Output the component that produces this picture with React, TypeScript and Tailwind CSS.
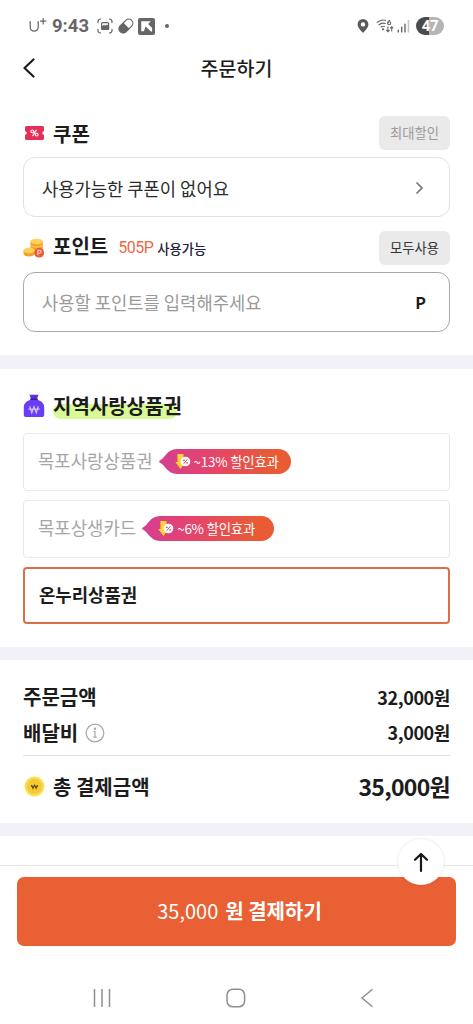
import type { ReactNode } from "react";

interface SectionTitleProps {
  icon: ReactNode;
  children: ReactNode;
}

interface VoucherProps {
  name: string;
  discount?: string;
  selected?: boolean;
}

const vouchers: VoucherProps[] = [
  { name: "목포사랑상품권", discount: "~13% 할인효과" },
  { name: "목포상생카드", discount: "~6% 할인효과" },
  { name: "온누리상품권", selected: true },
];

function StatusBar() {
  return (
    <div className="flex h-[52px] items-center justify-between pl-[29px] pr-[29px] text-[#666]">
      <div className="flex items-center">
        <svg width="18" height="20" viewBox="0 0 18 20" fill="none" stroke="currentColor" strokeWidth="1.2">
          <path d="M1.2 5v6.2a4 4 0 0 0 8 0V5M11 5.2h6.4M14.2 2v6.4" />
        </svg>
        <span className="ml-[5px] w-[38px] font-[Roboto] text-[18.500px] leading-5 font-bold whitespace-nowrap">9:43</span>
        {/* 캡처 */}
        <svg className="ml-[6.500px]" width="16" height="16" viewBox="0 0 16 16" fill="none" stroke="currentColor" strokeWidth="1.2">
          <path d="M1 5V3.500Q1 1 4 1M12 1q3 0 3 2.500V5M15 11v1.500q0 2.500-3 2.500M4 15q-3 0-3-2.500V11" />
          <rect x="4.600" y="4.700" width="7" height="6.800" rx="1" />
          <path d="M5 11V9l2-1.500 1.500 1L10 7.200l1.500 1V11z" fill="currentColor" />
        </svg>
        {/* 알약 */}
        <svg className="ml-[5px]" width="16" height="16" viewBox="0 0 16 16">
          <g transform="rotate(-45 8 8)">
            <rect x="0" y="3.900" width="16" height="8.200" rx="4.100" fill="none" stroke="currentColor" strokeWidth="1.200" />
            <path d="M8.500 3.400H4a4.600 4.600 0 0 0 0 9.200h4.500z" fill="currentColor" />
          </g>
        </svg>
        <svg className="ml-[4px]" width="17" height="17" viewBox="0 0 17 17">
          <rect width="17" height="17" rx="2" fill="currentColor" />
          <path d="M3.200 3.200h9.600l-2.700 2.700 4 4v3.600h-1.200L7.600 8.600 5.900 13.300H3.200z" fill="#fff" />
        </svg>
        <span className="ml-[10px] size-1 rounded-full bg-[#666]" />
      </div>
      <div className="flex items-center">
        <svg width="12" height="14" viewBox="0 0 12 14">
          <path fillRule="evenodd" d="M6 0a5.400 5.400 0 0 1 5.400 5.400C11.400 9 6 13.800 6 13.800S.6 9 .6 5.400A5.400 5.400 0 0 1 6 0zm0 3.200a2.200 2.200 0 1 0 0 4.400 2.200 2.200 0 0 0 0-4.400z" fill="#5a5a5a" />
        </svg>
        <svg className="ml-[7px]" width="19" height="16" viewBox="0 0 19 16" fill="none" stroke="currentColor" strokeWidth="1.100">
          <path d="M.7 4.700Q5 .8 10 2.400M2.600 7Q6 4.200 9.800 5.600M4.600 9.200q2.200-1.600 4.400-.6" />
          <circle cx="7" cy="11.300" r=".6" fill="currentColor" />
          <path d="M14.200 2.200q-2.600.8-2.600 3.200" />
          <circle cx="13.200" cy="5.300" r="1.500" />
          <path d="M11.900 8.400v5.200m-1.600-1.600 1.600 1.700 1.600-1.700M15.700 13.600V8.800m-1.600 1.600 1.600-1.700 1.600 1.700" />
        </svg>
        <svg className="ml-[2px]" width="13" height="14" viewBox="0 0 13 14" fill="currentColor">
          <rect x=".6" y="10.500" width="1.400" height="3" rx=".6" />
          <rect x="4" y="7.500" width="1.400" height="6" rx=".6" />
          <rect x="7.300" y="4.500" width="1.400" height="9" rx=".6" />
          <rect x="10.700" y="1" width="1.500" height="12.500" rx=".6" fill="#c4c4c4" />
        </svg>
        <div className="ml-[6px] flex h-[18px] w-7 items-center justify-center rounded-full bg-linear-to-r from-[#4b4b4b] from-47% to-[#b5b5b5] to-47% font-[Roboto] text-[15px] leading-none font-bold tracking-[-0.3px] text-white">
          47
        </div>
      </div>
    </div>
  );
}

function CouponIcon() {
  return (
    <svg width="21" height="16" viewBox="0 0 21 16">
      <path d="M2.500 1h16a1.500 1.500 0 0 1 1.500 1.500v3.700a1.800 1.800 0 0 0 0 3.600v3.700a1.500 1.500 0 0 1-1.500 1.500h-16A1.500 1.500 0 0 1 1 13.500V9.800a1.800 1.800 0 0 0 0-3.600V2.500A1.500 1.500 0 0 1 2.500 1z" fill="#e52f58" />
      <g fill="none" stroke="#fff" strokeWidth="1.100">
        <circle cx="8.300" cy="6.400" r="1.400" />
        <circle cx="12.700" cy="9.600" r="1.400" />
        <path d="M12.400 4.900 8.600 11.100" />
      </g>
    </svg>
  );
}

function PointIcon() {
  return (
    <svg width="22" height="20" viewBox="0 0 22 20">
      <path d="M7.500 3.500v12.800h12.300V3.500z" fill="#f2a52b" />
      <ellipse cx="13.600" cy="3.600" rx="6.200" ry="2.800" fill="#ffd05a" />
      <path d="M7.500 7.200q6 4 12.200 0M7.500 11q6 4 12.200 0" fill="none" stroke="#ffcf5c" strokeWidth="1" />
      <path d="M.5 12.500v3.600q1 2.500 5.500 2.500t5.600-2.500v-3.600z" fill="#f0a22c" />
      <ellipse cx="6" cy="12.500" rx="5.600" ry="2.700" fill="#ffd05a" />
      <circle cx="16.200" cy="14.700" r="4.900" fill="#ee5a35" />
      <path d="M14.900 17.300v-5h1.700a1.500 1.500 0 0 1 0 3h-1.700" fill="none" stroke="#ffd9cd" strokeWidth="1.100" />
    </svg>
  );
}

function BagIcon() {
  return (
    <svg width="22" height="24" viewBox="0 0 22 24">
      <path d="M6.500.8h9L14.300 4v3.500H7.700V4z" fill="#5a2ee0" />
      <path d="M6.800 6h8.400C19.300 7.500 21.200 10 21.200 13v7.500a2.600 2.600 0 0 1-2.600 2.600H3.400A2.600 2.600 0 0 1 .8 20.500V13C.8 10 2.700 7.500 6.800 6z" fill="#6a3cf5" />
      <path d="M7.300 5.300h7.400" stroke="#3c1d9c" strokeWidth="1.500" />
      <path d="m6.700 12.300 2.100 6.400L11 12.600l2.200 6.100 2.100-6.400M5.300 15.200h11.400" fill="none" stroke="#cbbcff" strokeWidth="1.300" />
    </svg>
  );
}

function CoinIcon() {
  return (
    <svg width="21" height="21" viewBox="0 0 21 21">
      <circle cx="10.500" cy="10.500" r="10" fill="#fbe14c" />
      <circle cx="10.500" cy="10.500" r="7.800" fill="#f3cb38" />
      <path d="m7.400 8.900 1.500 3.500 1.600-3.300 1.600 3.300 1.500-3.500M6.900 10.200h7.200" fill="none" stroke="#6d5212" strokeWidth="1.100" />
    </svg>
  );
}

function SectionTitle({ icon, children }: SectionTitleProps) {
  return (
    <div className="flex items-center">
      <span className="flex w-[30px] shrink-0 items-center">{icon}</span>
      {children}
    </div>
  );
}

function DiscountTag({ label }: { label: string }) {
  return (
    <div className="relative ml-[6px] flex h-[25px] w-[132px] items-center pl-4">
      <svg className="absolute inset-0" width="132" height="25" viewBox="0 0 132 25">
        <defs>
          <linearGradient id="tag" x1="0" x2="1">
            <stop offset="0" stopColor="#d43f91" />
            <stop offset=".4" stopColor="#e5446b" />
            <stop offset=".85" stopColor="#e85b35" />
          </linearGradient>
        </defs>
        <path d="M.5 13.300Q-.3 12.500.5 11.700C6 9.500 8 0 18 0h101.500a12.500 12.500 0 0 1 0 25H18C8 25 6 15.500.5 13.300z" fill="url(#tag)" />
      </svg>
      <svg className="relative shrink-0" width="16" height="17" viewBox="0 0 16 17">
        <path d="M2.500 1h6v7.500h2.300L5.500 16 .3 9h2.200z" fill="#ffd43b" />
        <circle cx="10.500" cy="8.500" r="4.800" fill="#fff" />
        <path d="m12.300 6.300-3.600 4.400" stroke="#e5446b" strokeWidth="1" />
        <circle cx="8.900" cy="7.300" r=".9" fill="#e5446b" />
        <circle cx="12.100" cy="9.800" r=".9" fill="#e5446b" />
      </svg>
      <span className="relative ml-[3px] text-[13.400px] leading-none tracking-[-0.2px] whitespace-nowrap text-white">{label}</span>
    </div>
  );
}

function Voucher({ name, discount, selected }: VoucherProps) {
  if (selected) {
    return (
      <div className="flex h-[57px] items-center rounded-[4px] border-2 border-[#dd6f47] pb-[2px] pl-[14px] text-[17.8px] font-bold text-[#1c1c1c]">
        {name}
      </div>
    );
  }
  return (
    <div className="flex h-[58px] items-center rounded-[4px] border border-[#e9e9e9] pb-px pl-[14px] text-[17.8px] text-[#a6a6a6]">
      <span className="-mt-[2px]">{name}</span>
      {discount && <DiscountTag label={discount} />}
    </div>
  );
}

export default function App() {
  return (
    <div className="flex h-[1024px] w-[473px] flex-col overflow-hidden bg-white font-['Noto_Sans_CJK_KR',sans-serif] text-[#1c1c1c]">
      <StatusBar />

      {/* 헤더 */}
      <header className="grid h-8 grid-cols-[1fr_auto_1fr] items-center px-[22px]">
        <svg width="14" height="20" viewBox="0 0 14 20" fill="none" stroke="#1c1c1c" strokeWidth="2.200" strokeLinecap="round" strokeLinejoin="round">
          <path d="M11.500 1.500 2.500 10l9 8.500" />
        </svg>
        <h1 className="text-[19.5px] leading-8 font-medium">주문하기</h1>
      </header>

      {/* 쿠폰, 포인트 */}
      <section className="px-[23px] pt-8">
        <div className="flex h-[34px] items-center justify-between">
          <SectionTitle icon={<span className="pl-px"><CouponIcon /></span>}>
            <h2 className="mt-[2px] text-[20px] leading-none font-bold">쿠폰</h2>
          </SectionTitle>
          <button className="h-[34px] w-[71px] rounded-[6px] bg-[#eaeaea] text-[13.3px] text-[#9b9b9b]">최대할인</button>
        </div>
        <div className="mt-[7px] flex h-[60px] items-center justify-between rounded-[12px] border border-[#e3e3e3] pt-[2px] pr-[25px] pl-[18px]">
          <span className="text-[17.7px] text-[#2c2c2c]">사용가능한 쿠폰이 없어요</span>
          <svg width="9" height="14" viewBox="0 0 9 14" fill="none" stroke="#777" strokeWidth="1.700">
            <path d="m1.500 1.500 5.500 5.500-5.500 5.500" />
          </svg>
        </div>
        <div className="mt-[14px] flex h-[34px] items-center justify-between">
          <SectionTitle icon={<PointIcon />}>
            <h2 className="-mt-[4px] text-[20px] leading-none font-bold">포인트</h2>
            <span className="ml-[10px] w-[35px] font-[Roboto] text-[16px] tracking-[-0.5px] text-[#ee6844]">505P</span>
            <span className="ml-[4px] mt-px text-[13.300px] font-medium text-[#26203a]">사용가능</span>
          </SectionTitle>
          <button className="h-[34px] w-[71px] rounded-[6px] bg-[#eaeaea] text-[13.300px] text-[#333]">모두사용</button>
        </div>
        <div className="mt-[7px] flex h-[60px] items-center justify-between rounded-[12px] border border-[#a9a9a9] pr-[23px] pl-[18px]">
          <span className="text-[17.7px] text-[#9a9a9a]">사용할 포인트를 입력해주세요</span>
          <span className="text-[16px] font-bold">P</span>
        </div>
      </section>

      <div className="mt-[23px] h-[14px] shrink-0 bg-[#f1f1f7]" />

      {/* 지역사랑상품권 */}
      <section className="px-[23px] pt-[23px]">
        <SectionTitle icon={<BagIcon />}>
          <h2 className="relative isolate text-[20px] leading-7 font-bold">
            <span className="absolute bottom-px left-0 -z-10 h-[15px] w-[124px] rounded-full bg-[#d9fa97]" />
            지역사랑상품권
          </h2>
        </SectionTitle>
        <div className="mt-[13px] flex flex-col gap-[9px]">
          {vouchers.map((voucher) => (
            <Voucher key={voucher.name} {...voucher} />
          ))}
        </div>
      </section>

      <div className="mt-[23px] h-[13px] shrink-0 bg-[#f1f1f7]" />

      {/* 결제 금액 */}
      <section className="px-[23px] pt-[19px] font-bold">
        <div className="flex h-9 items-center justify-between">
          <span className="text-[20px]">주문금액</span>
          <span className="text-[18px] tracking-[-0.4px]">32,000원</span>
        </div>
        <div className="flex h-[35px] items-center justify-between">
          <span className="flex items-center text-[20px]">
            배달비
            <svg className="ml-[7px]" width="20" height="20" viewBox="0 0 20 20" fill="none" stroke="#a8a8a8" strokeWidth="1.200">
              <circle cx="10" cy="10" r="8.800" />
              <path d="M8.500 8.500H10V14M8.200 14.200h3.600" />
              <circle cx="10" cy="5.800" r=".6" fill="#a8a8a8" />
            </svg>
          </span>
          <span className="text-[18px] tracking-[-0.4px]">3,000원</span>
        </div>
        <div className="mt-[5px] flex h-[68px] items-center justify-between border-t border-[#e1e1e1] pb-[6px]">
          <SectionTitle icon={<span className="pl-px"><CoinIcon /></span>}>
            <span className="text-[20px]">총 결제금액</span>
          </SectionTitle>
          <span className="text-[23px] tracking-[-0.7px]">35,000원</span>
        </div>
      </section>

      <div className="h-[13px] shrink-0 bg-[#f1f1f7]" />

      {/* 결제 버튼 */}
      <div className="relative mt-[29px] border-t border-[#ebe6e9] px-[17px] pt-[11px]">
        <button className="flex h-[69px] w-full items-center justify-center rounded-[7px] bg-[#e86034] pb-[2px] pl-[6px] text-[20px] text-white">
          <span>35,000</span>
          <span className="ml-[7px] font-bold">원 결제하기</span>
        </button>
        <button className="absolute -top-[27px] right-[29px] flex size-[46px] items-center justify-center rounded-full bg-white shadow-[0_0_3px_rgba(0,0,0,0.13)]">
          <svg width="16" height="21" viewBox="0 0 16 21" fill="none" stroke="#171717" strokeWidth="2.200" strokeLinecap="round" strokeLinejoin="round">
            <path d="M8 19V2M2 7.800 8 2l6 5.800" />
          </svg>
        </button>
      </div>

      {/* 내비게이션 바 */}
      <nav className="mt-[42px] flex h-5 items-center justify-between pr-[99px] pl-[93px] text-[#8e8e8e]">
        <svg width="18" height="20" viewBox="0 0 18 20" stroke="currentColor" strokeWidth="1.500">
          <path d="M1.500 1v18M9 1v18M16.500 1v18" />
        </svg>
        <svg width="20" height="20" viewBox="0 0 20 20" fill="none" stroke="currentColor" strokeWidth="1.500">
          <rect x="1" y="1.200" width="17.600" height="17.600" rx="5.800" />
        </svg>
        <svg width="14" height="20" viewBox="0 0 14 20" fill="none" stroke="currentColor" strokeWidth="1.500">
          <path d="M12.500 1.200 2 10l10.500 8.800" />
        </svg>
      </nav>
    </div>
  );
}
